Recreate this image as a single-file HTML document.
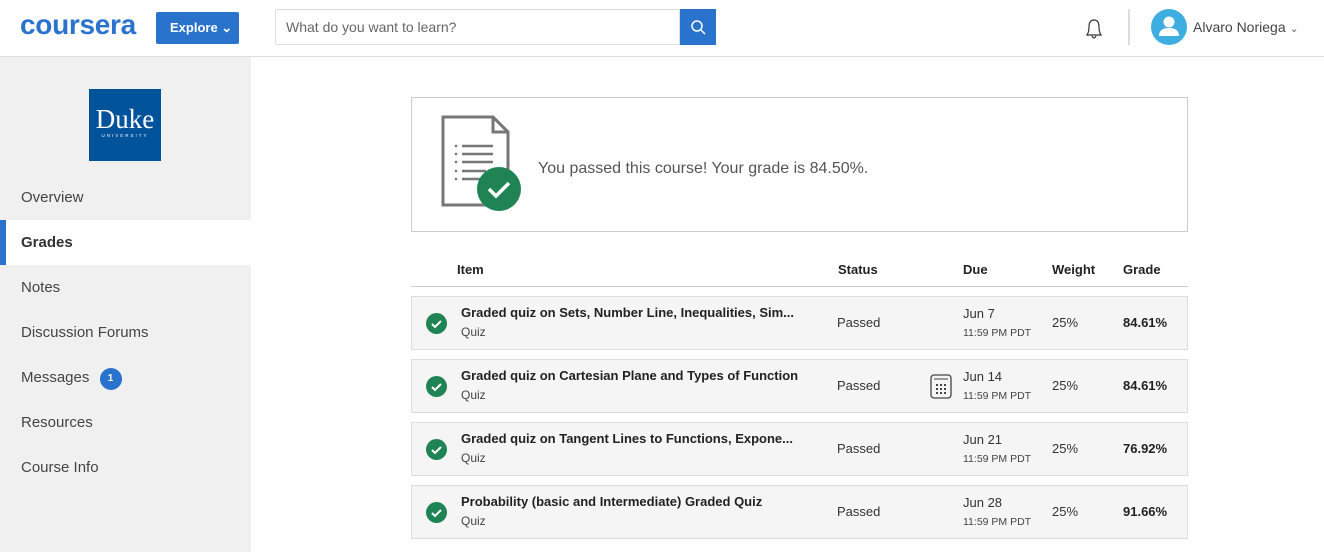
<!DOCTYPE html>
<html><head><meta charset="utf-8"><style>
*{box-sizing:border-box;margin:0;padding:0}
body{width:1324px;height:552px;overflow:hidden;background:#fff;font-family:"Liberation Sans",sans-serif;color:#333;position:relative}
.hdr{position:absolute;left:0;top:0;width:1324px;height:57px;border-bottom:1px solid #ddd;background:#fff}
.logo{position:absolute;left:20px;top:9px;font-size:28px;font-weight:bold;color:#2a73cc;letter-spacing:-0.3px}
.explore{position:absolute;left:156px;top:12px;width:83px;height:32px;background:#2a73cc;border-radius:2px;color:#fff;font-weight:bold;font-size:13px;line-height:32px;padding-left:14px}
.search{position:absolute;left:275px;top:9px;width:405px;height:36px;border:1px solid #ddd;border-radius:2px 0 0 2px;font-size:14px;color:#666;line-height:34px;padding-left:10px}
.sbtn{position:absolute;left:680px;top:9px;width:36px;height:36px;background:#2a73cc}
.side{position:absolute;left:0;top:57px;width:251px;height:495px;background:#f0f0f0}
.duke{position:absolute;left:89px;top:89px;width:72px;height:72px;background:#00529b;color:#fff;font-family:"Liberation Serif",serif;text-align:center}
.nav{position:absolute;left:0;width:251px;height:45px;line-height:45px;padding-left:21px;font-size:15px;color:#444}
.card{position:absolute;left:411px;top:97px;width:777px;height:135px;border:1px solid #ccc}
.th{position:absolute;top:262px;font-size:13px;font-weight:bold;color:#222}
.row{position:absolute;left:411px;width:777px;height:54px;background:#f5f5f5;border:1px solid #ddd}
.row .ck{position:absolute;left:14px;top:16px;width:21px;height:21px;border-radius:50%;background:#1f8354}
.row .t{position:absolute;left:49px;top:8px;font-size:13px;font-weight:bold;color:#222}
.row .q{position:absolute;left:49px;top:28px;font-size:12px;color:#444}
.row .s{position:absolute;left:425px;top:18px;font-size:13px;color:#333}
.row .d{position:absolute;left:551px;top:9px;font-size:13px;color:#333}
.row .dt{position:absolute;left:551px;top:30px;font-size:10.5px;color:#444}
.row .w{position:absolute;left:640px;top:18px;font-size:13px;color:#333}
.row .g{position:absolute;left:711px;top:18px;font-size:13px;font-weight:bold;color:#222}
</style></head><body>
<div class="hdr">
<div class="logo">coursera</div>
<div class="explore">Explore ⌄</div>
<div class="search">What do you want to learn?</div>
<div class="sbtn"><svg width="36" height="36"><circle cx="17" cy="17" r="5" fill="none" stroke="#fff" stroke-width="1.5"/><path d="M21 21l4 4" stroke="#fff" stroke-width="1.5"/></svg></div>
<svg style="position:absolute;left:1083px;top:16px" width="22" height="26"><path d="M4 19 Q6 16 6 11 Q6 4 11 4 Q16 4 16 11 Q16 16 18 19 Z M9 20 Q11 24 13 20" fill="none" stroke="#333" stroke-width="1.2"/></svg>
<div style="position:absolute;left:1128px;top:9px;width:2px;height:36px;background:#ddd"></div>
<svg style="position:absolute;left:1151px;top:9px" width="36" height="36"><circle cx="18" cy="18" r="18" fill="#3eaee0"/><circle cx="18" cy="13" r="5.5" fill="#fff"/><path d="M8 27 Q8 19 18 19 Q28 19 28 27 Z" fill="#fff"/></svg>
<div style="position:absolute;left:1193px;top:19px;font-size:14px;color:#444">Alvaro Noriega <span style="font-size:11px;color:#666">&#8964;</span></div>
</div>
<div class="side"></div>
<div class="duke"><div style="font-size:27px;margin-top:17px;line-height:27px">Duke</div><div style="font-size:4.5px;letter-spacing:2px;font-family:'Liberation Sans',sans-serif">UNIVERSITY</div></div>
<div class="nav" style="top:175px">Overview</div>
<div class="nav" style="top:220px;background:#fff;font-weight:bold;color:#333">Grades</div>
<div style="position:absolute;left:0;top:220px;width:6px;height:45px;background:#2a73cc"></div>
<div class="nav" style="top:265px">Notes</div>
<div class="nav" style="top:310px">Discussion Forums</div>
<div class="nav" style="top:355px">Messages <span style="display:inline-block;width:22px;height:22px;border-radius:50%;background:#2a73cc;color:#fff;font-size:10px;font-weight:bold;text-align:center;line-height:22px;margin-left:6px;vertical-align:1px">1</span></div>
<div class="nav" style="top:400px">Resources</div>
<div class="nav" style="top:445px">Course Info</div>
<div class="card">
<svg style="position:absolute;left:29px;top:17px" width="82" height="98"><path d="M2 2H52L67 17V90H2Z M52 2V17H67" fill="none" stroke="#777" stroke-width="3"/><g stroke="#777" stroke-width="2.5"><path d="M21 31H52M21 39H52M21 47H52M21 56H45M21 64H40"/></g><g fill="#777"><circle cx="15" cy="31" r="1.3"/><circle cx="15" cy="39" r="1.3"/><circle cx="15" cy="47" r="1.3"/><circle cx="15" cy="56" r="1.3"/><circle cx="15" cy="64" r="1.3"/></g><circle cx="58" cy="74" r="22" fill="#1f8354"/><path d="M48 74l7 7 13-13" fill="none" stroke="#fff" stroke-width="3.5"/></svg>
<div style="position:absolute;left:126px;top:62px;font-size:16px;color:#555">You passed this course! Your grade is 84.50%.</div>
</div>
<div class="th" style="left:457px">Item</div>
<div class="th" style="left:838px">Status</div>
<div class="th" style="left:963px">Due</div>
<div class="th" style="left:1052px">Weight</div>
<div class="th" style="left:1123px">Grade</div>
<div style="position:absolute;left:411px;top:286px;width:777px;height:1px;background:#ccc"></div>

<div class="row" style="top:296px"><div class="ck"><svg width="21" height="21"><path d="M6 11l3 3 6-6" fill="none" stroke="#fff" stroke-width="2"/></svg></div><div class="t">Graded quiz on Sets, Number Line, Inequalities, Sim...</div><div class="q">Quiz</div><div class="s">Passed</div><div class="d">Jun 7</div><div class="dt">11:59 PM PDT</div><div class="w">25%</div><div class="g">84.61%</div></div>
<div class="row" style="top:359px"><div class="ck"><svg width="21" height="21"><path d="M6 11l3 3 6-6" fill="none" stroke="#fff" stroke-width="2"/></svg></div><div class="t">Graded quiz on Cartesian Plane and Types of Function</div><div class="q">Quiz</div><div class="s">Passed</div>
<svg style="position:absolute;left:518px;top:14px" width="22" height="25"><rect x="1" y="1" width="20" height="23" rx="3" fill="none" stroke="#444" stroke-width="1.3"/><path d="M4 5H18" stroke="#444"/><g fill="#444"><rect x="6" y="10" width="2" height="2"/><rect x="10" y="10" width="2" height="2"/><rect x="14" y="10" width="2" height="2"/><rect x="6" y="14" width="2" height="2"/><rect x="10" y="14" width="2" height="2"/><rect x="14" y="14" width="2" height="2"/><rect x="6" y="18" width="2" height="2"/><rect x="10" y="18" width="2" height="2"/><rect x="14" y="18" width="2" height="2"/></g></svg>
<div class="d">Jun 14</div><div class="dt">11:59 PM PDT</div><div class="w">25%</div><div class="g">84.61%</div></div>
<div class="row" style="top:422px"><div class="ck"><svg width="21" height="21"><path d="M6 11l3 3 6-6" fill="none" stroke="#fff" stroke-width="2"/></svg></div><div class="t">Graded quiz on Tangent Lines to Functions, Expone...</div><div class="q">Quiz</div><div class="s">Passed</div><div class="d">Jun 21</div><div class="dt">11:59 PM PDT</div><div class="w">25%</div><div class="g">76.92%</div></div>
<div class="row" style="top:485px"><div class="ck"><svg width="21" height="21"><path d="M6 11l3 3 6-6" fill="none" stroke="#fff" stroke-width="2"/></svg></div><div class="t">Probability (basic and Intermediate) Graded Quiz</div><div class="q">Quiz</div><div class="s">Passed</div><div class="d">Jun 28</div><div class="dt">11:59 PM PDT</div><div class="w">25%</div><div class="g">91.66%</div></div>
</body></html>
